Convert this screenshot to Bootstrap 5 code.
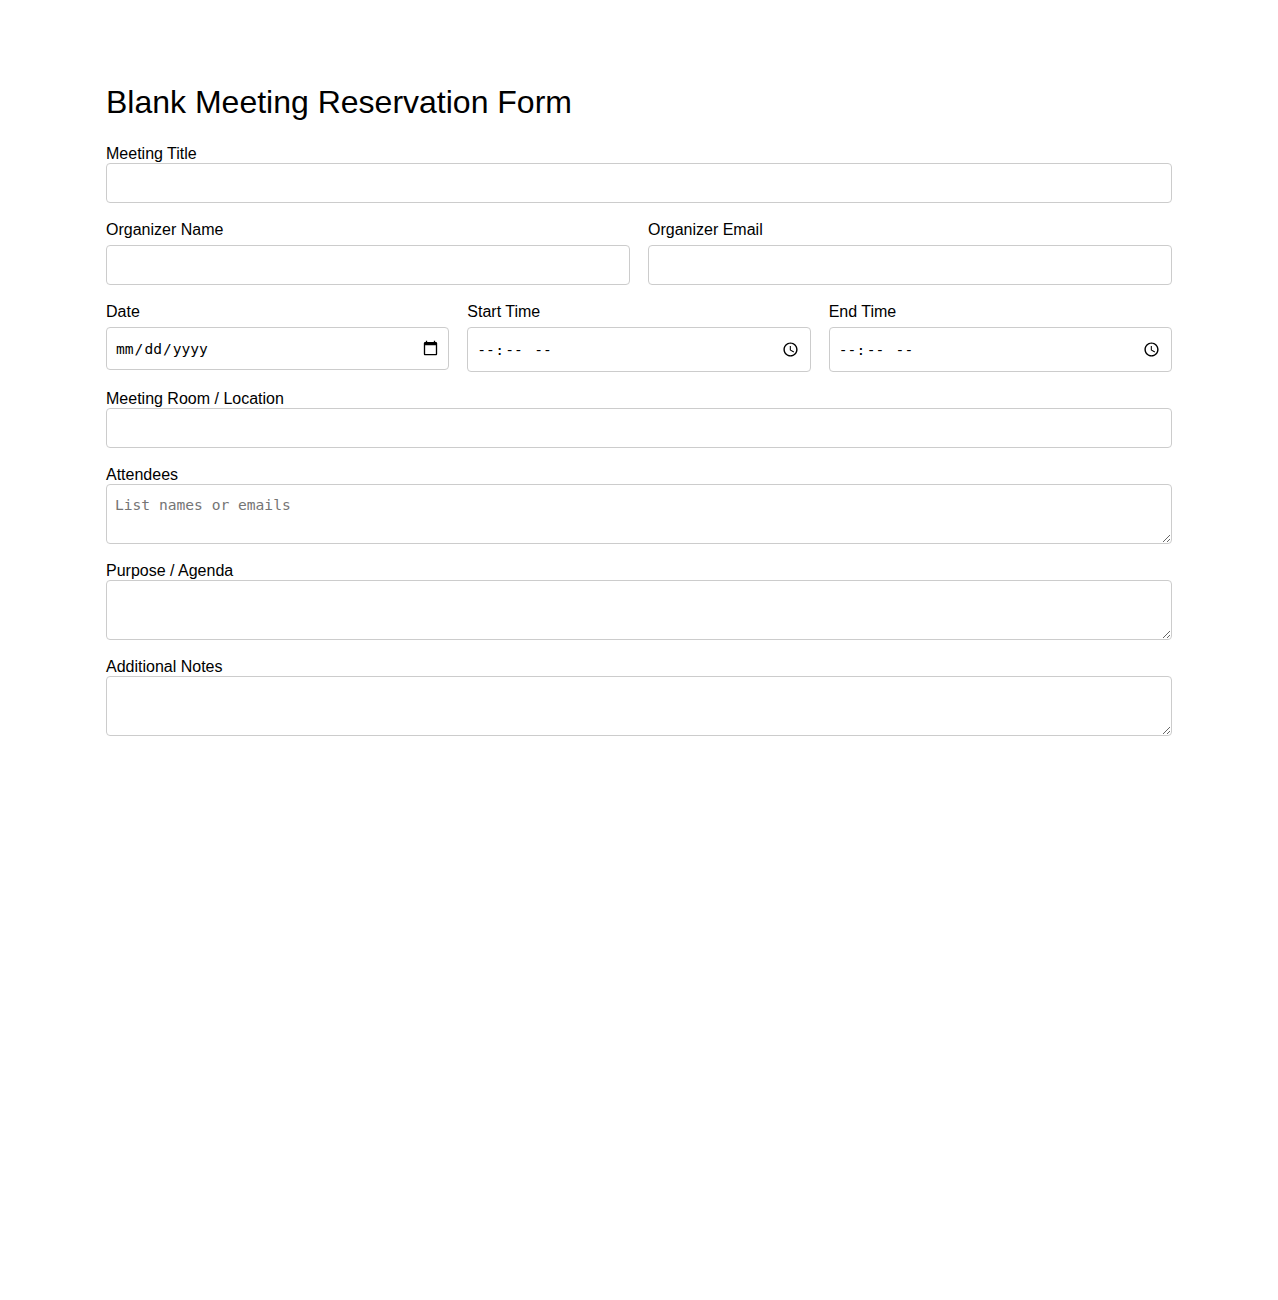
<!DOCTYPE html>
<html lang="en">
<head>
<meta charset="utf-8">
<title>Blank Meeting Reservation Form</title>
<link href="https://cdn.jsdelivr.net/npm/bootstrap@5.3.0/dist/css/bootstrap.min.css" rel="stylesheet">
<style>
body { font-family: "Liberation Sans", Arial, sans-serif; font-size: 16px; color: #000; background: #fff; }
.sheet { padding: 84px 106px 0; }
.sheet-title { font-family: "Liberation Sans", Arial, sans-serif; font-size: 32px; font-weight: 400; line-height: 37px; margin: 0 0 24px; color: #000; }
.field { display: block; margin-bottom: 18px; }
.field-label { display: block; line-height: 18px; margin: 0; color: #000; }
.row-fields { --bs-gutter-x: 18px; --bs-gutter-y: 0; }
.row-fields .field-label { margin-bottom: 6px; }
.form-control.entry { font-family: "DejaVu Sans Mono", monospace; font-size: 14.6px; line-height: 18px; color: #000; border: 1px solid #ccc; border-radius: 4px; padding: 8px; height: 40px; min-height: 0; box-shadow: none; }
.form-control.entry::placeholder { color: #757575; opacity: 1; }
.form-control.entry-date { height: 43px; }
.form-control.entry-time { height: 45px; }
.entry::-webkit-datetime-edit { padding-left: 1px; }
.entry-date::-webkit-datetime-edit-text { padding: 0 1px; }
.entry-time::-webkit-datetime-edit-text { padding: 0 0.3px; }
.entry::-webkit-calendar-picker-indicator { width: 17px; height: 17px; padding: 0; }
.entry-date::-webkit-calendar-picker-indicator { margin-right: 1px; }
.entry-time::-webkit-calendar-picker-indicator { margin-right: 3px; }
textarea.form-control.entry { height: 60px; min-height: 0; resize: vertical; padding-top: 11px; }
</style>
</head>
<body>
<main class="sheet">
  <h1 class="sheet-title">Blank Meeting Reservation Form</h1>
  <form>
    <div class="field">
      <label class="field-label" for="title">Meeting Title</label>
      <input class="form-control entry" id="title" type="text">
    </div>
    <div class="row row-fields">
      <div class="col-6 field">
        <label class="field-label" for="oname">Organizer Name</label>
        <input class="form-control entry" id="oname" type="text">
      </div>
      <div class="col-6 field">
        <label class="field-label" for="oemail">Organizer Email</label>
        <input class="form-control entry" id="oemail" type="email">
      </div>
    </div>
    <div class="row row-fields">
      <div class="col-4 field">
        <label class="field-label" for="date">Date</label>
        <input class="form-control entry entry-date" id="date" type="date">
      </div>
      <div class="col-4 field">
        <label class="field-label" for="start">Start Time</label>
        <input class="form-control entry entry-time" id="start" type="time">
      </div>
      <div class="col-4 field">
        <label class="field-label" for="end">End Time</label>
        <input class="form-control entry entry-time" id="end" type="time">
      </div>
    </div>
    <div class="field">
      <label class="field-label" for="room">Meeting Room / Location</label>
      <input class="form-control entry" id="room" type="text">
    </div>
    <div class="field">
      <label class="field-label" for="att">Attendees</label>
      <textarea class="form-control entry" id="att" placeholder="List names or emails"></textarea>
    </div>
    <div class="field">
      <label class="field-label" for="agenda">Purpose / Agenda</label>
      <textarea class="form-control entry" id="agenda"></textarea>
    </div>
    <div class="field">
      <label class="field-label" for="notes">Additional Notes</label>
      <textarea class="form-control entry" id="notes"></textarea>
    </div>
  </form>
</main>
<script src="https://cdn.jsdelivr.net/npm/bootstrap@5.3.0/dist/js/bootstrap.bundle.min.js"></script>
</body>
</html>
